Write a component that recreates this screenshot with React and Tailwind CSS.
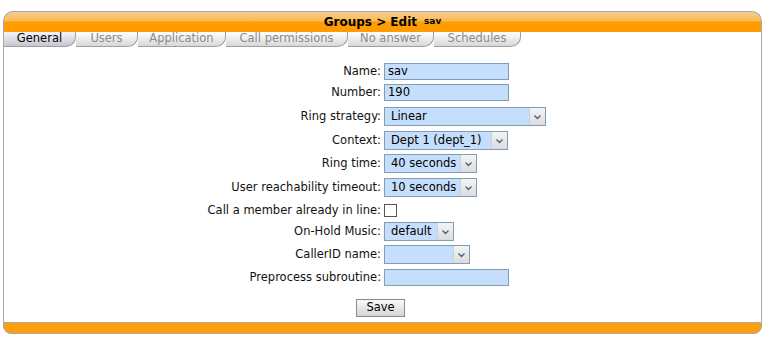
import React from 'react'

const tabs = ['General', 'Users', 'Application', 'Call permissions', 'No answer', 'Schedules']
const tabWidths = ['w-[72px]', 'w-[62px]', 'w-[88px]', 'w-[122px]', 'w-[86px]', 'w-[87px]']

function Chevron() {
  return (
    <svg width="9" height="6" viewBox="0 0 9 6">
      <path d="M1.5 1.5 L4.5 4.5 L7.5 1.5" fill="none" stroke="#4d6185" strokeWidth="1.4" />
    </svg>
  )
}

function TextInput({ value }) {
  return (
    <div className="w-[125px] h-[17px] border border-[#7f9db9] bg-[#c5defb] pl-[3px] leading-[15px] text-black">
      {value}
    </div>
  )
}

function Select({ value, width }) {
  return (
    <div className={`${width} h-[19px] flex border border-[#7f9db9] bg-[#c5defb]`}>
      <div className="flex-1 pl-[6px] leading-[17px] text-black whitespace-nowrap overflow-hidden">{value}</div>
      <div className="w-[16px] h-full border-l border-[#c8d0dc] bg-[linear-gradient(#f4f4f4,#dcdcdc)] flex items-center justify-center">
        <Chevron />
      </div>
    </div>
  )
}

function Row({ label, mt, children }) {
  return (
    <div className={`flex items-center h-[19px] ${mt}`}>
      <div className="w-[380px] text-right text-[#111] pr-[3px] whitespace-nowrap">{label}</div>
      {children}
    </div>
  )
}

export default function App() {
  return (
    <div className="w-[763px] h-[337px] bg-white pt-[11px] pl-[3px] pr-[1px] font-['DejaVu_Sans',Verdana,sans-serif] text-[11.5px]">
      <div className="h-[21px] rounded-t-[10px] border border-b-0 border-[#a8a8a8] bg-[linear-gradient(#f7cf94,#fcb94f_45%,#ff9c00_50%,#ff9c00)] flex items-center justify-center gap-[7px]">
        <span className="font-bold text-[12px] text-black">Groups &gt; Edit</span>
        <span className="font-bold text-[9px] text-black">sav</span>
      </div>
      <div className="flex h-[15px] border-l border-[#a8a8a8] border-r text-[11.5px]">
        {tabs.map((t, i) => (
          <div
            key={t}
            className={`${tabWidths[i]} h-[15px] flex items-center justify-center rounded-br-[10px] border-r border-b border-[#a0a0a0] leading-none ${
              i === 0
                ? 'bg-[linear-gradient(#f4f4f8,#c6c6d2)] text-black'
                : 'bg-[linear-gradient(#ffffff,#d8d8d8)] text-[#8a8a8a]'
            }`}
          >
            {t}
          </div>
        ))}
      </div>
      <div className="h-[275px] border-l border-r border-[#a8a8a8] pt-[15px] flex flex-col">
        <Row label="Name:" mt="mt-0">
          <TextInput value="sav" />
        </Row>
        <Row label="Number:" mt="mt-[2px]">
          <TextInput value="190" />
        </Row>
        <Row label="Ring strategy:" mt="mt-[5px]">
          <Select value="Linear" width="w-[162px]" />
        </Row>
        <Row label="Context:" mt="mt-[5px]">
          <Select value="Dept 1 (dept_1)" width="w-[124px]" />
        </Row>
        <Row label="Ring time:" mt="mt-[4px]">
          <Select value="40 seconds" width="w-[93px]" />
        </Row>
        <Row label="User reachability timeout:" mt="mt-[5px]">
          <Select value="10 seconds" width="w-[93px]" />
        </Row>
        <Row label="Call a member already in line:" mt="mt-[4px]">
          <div className="w-[13px] h-[13px] border border-[#555] bg-white" />
        </Row>
        <Row label="On-Hold Music:" mt="mt-[2px]">
          <Select value="default" width="w-[70px]" />
        </Row>
        <Row label="CallerID name:" mt="mt-[4px]">
          <Select value="" width="w-[86px]" />
        </Row>
        <Row label="Preprocess subroutine:" mt="mt-[4px]">
          <TextInput value="" />
        </Row>
        <div className="flex justify-center mt-[12px] pr-[4px]">
          <button className="w-[49px] h-[18px] border border-[#8a8a8a] bg-[linear-gradient(#fafafa,#d4d4d4)] text-black text-[11.5px] leading-none font-['DejaVu_Sans',sans-serif]">
            Save
          </button>
        </div>
      </div>
      <div className="h-[12px] rounded-b-[8px] bg-[#ffa00a] border border-[#a8a8a8]" />
    </div>
  )
}
